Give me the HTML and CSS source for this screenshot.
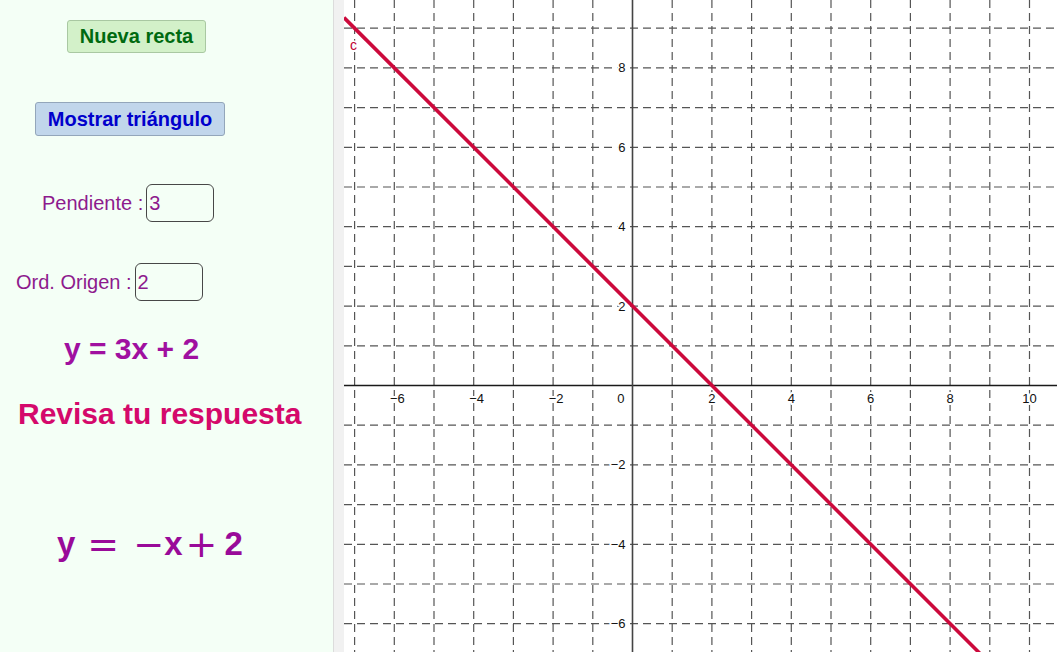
FILE: index.html
```html
<!DOCTYPE html>
<html lang="es">
<head>
<meta charset="utf-8">
<title>Recta</title>
<link rel="stylesheet" href="styles.css">
</head>
<body>
<div class="app">
  <div class="panel">
    <div class="row row-b1"><button class="btn btn-green">Nueva recta</button></div>
    <div class="row row-b2"><button class="btn btn-blue">Mostrar triángulo</button></div>
    <div class="row row-in1"><span class="lbl">Pendiente :</span><span class="box">3</span></div>
    <div class="row row-in2"><span class="lbl">Ord. Origen :</span><span class="box">2</span></div>
    <div class="row row-eq">y = 3x + 2</div>
    <div class="row row-rev">Revisa tu respuesta</div>
    <div class="row row-math"><span class="m m-y">y</span><span class="m m-op m-eq">=</span><span class="m m-op m-minus">−</span><span class="m m-x">x</span><span class="m m-op m-plus">+</span><span class="m m-2">2</span></div>
  </div>
  <div class="strip"></div>
  <div class="graph">
    <svg class="plot" width="713" height="652" viewBox="0 0 713 652" xmlns="http://www.w3.org/2000/svg">
      <g class="grid" id="grid"></g>
      <line class="axis" x1="0" y1="385.5" x2="713" y2="385.5"/>
      <line class="axis axis-y" x1="288.5" y1="0" x2="288.5" y2="652"/>
      <g class="labels" id="labels"></g>
      <line class="rline" x1="0" y1="17.6" x2="713" y2="730.5"/>
      <text class="clabel" x="6" y="50">c</text>
    </svg>
  </div>
</div>
<script src="script.js"></script>
</body>
</html>
```

FILE: script.js
```js
(function () {
  var ns = "http://www.w3.org/2000/svg";
  var ox = 288.5, oy = 385.5, u = 39.7;
  var grid = document.getElementById("grid");
  var labels = document.getElementById("labels");
  function el(name, attrs, parent, txt) {
    var e = document.createElementNS(ns, name);
    for (var k in attrs) e.setAttribute(k, attrs[k]);
    if (txt !== undefined) e.textContent = txt;
    parent.appendChild(e);
    return e;
  }
  var k, x, y;
  for (k = -8; k <= 11; k++) {
    if (k === 0) continue;
    x = ox + k * u;
    if (x < 0 || x > 713) continue;
    el("line", {x1: x, y1: 0, x2: x, y2: 652}, grid);
  }
  for (k = -7; k <= 10; k++) {
    if (k === 0) continue;
    y = oy - k * u;
    if (y < 0 || y > 652) continue;
    el("line", {x1: 0, y1: y, x2: 713, y2: y}, grid);
  }
  for (k = -6; k <= 10; k += 2) {
    if (k === 0) continue;
    x = ox + k * u + (k < 0 ? 3 : 0);
    el("text", {x: x, y: oy + 17.5, "text-anchor": "middle"}, labels, k < 0 ? "\u2212" + (-k) : String(k));
  }
  el("text", {x: ox - 8, y: oy + 17.5, "text-anchor": "end"}, labels, "0");
  for (k = -6; k <= 8; k += 2) {
    if (k === 0) continue;
    y = oy - k * u;
    el("text", {x: ox - 7, y: y + 4.5, "text-anchor": "end"}, labels, k < 0 ? "\u2212" + (-k) : String(k));
  }
})();
```

FILE: styles.css
```css
html, body {
  margin: 0;
  padding: 0;
  width: 1057px;
  height: 652px;
  overflow: hidden;
  font-family: "Liberation Sans", Arial, sans-serif;
}

.app {
  display: flex;
  width: 1057px;
  height: 652px;
}

.panel {
  width: 333px;
  height: 652px;
  flex: none;
  background: #f4fff6;
  border-right: 1px solid #dcdcdc;
  display: flex;
  flex-direction: column;
}

.strip {
  width: 10px;
  flex: none;
  background: #f1f1f1;
}

.graph {
  flex: 1;
  background: #ffffff;
  overflow: hidden;
}

.plot {
  display: block;
}

.row {
  display: flex;
  align-items: center;
}

.btn {
  font-family: "Liberation Sans", Arial, sans-serif;
  font-weight: bold;
  font-size: 20px;
  border-radius: 3px;
  padding: 0;
  margin: 0;
  box-sizing: border-box;
  white-space: nowrap;
  text-align: center;
  cursor: pointer;
}

.btn-green {
  height: 33px;
  width: 139px;
  background: #d3f1c9;
  border: 1px solid #a9c8a2;
  color: #006a10;
}

.btn-blue {
  height: 34px;
  width: 190px;
  background: #c1d6eb;
  border: 1px solid #93a6ba;
  color: #0000cc;
}

.row-b1 { margin-top: 20px; padding-left: 67px; }
.row-b2 { margin-top: 49px; padding-left: 35px; }

.lbl {
  font-size: 20px;
  color: #8d1a8d;
  margin-right: 3px;
  white-space: nowrap;
}

.box {
  box-sizing: border-box;
  width: 68px;
  height: 38px;
  border: 1.5px solid #474747;
  border-radius: 6px;
  font-size: 20px;
  color: #8d1a8d;
  display: flex;
  align-items: center;
  padding-left: 2px;
}

.row-in1 { margin-top: 48px; padding-left: 42px; }
.row-in2 { margin-top: 41px; padding-left: 16px; }

.row-eq {
  margin-top: 30px;
  padding-left: 64px;
  height: 36px;
  font-size: 30px;
  font-weight: bold;
  color: #a010a0;
}

.row-rev {
  margin-top: 29px;
  padding-left: 18px;
  height: 36px;
  font-size: 30px;
  font-weight: bold;
  color: #d4096b;
}

.row-math {
  margin-top: 92px;
  padding-left: 57px;
  height: 40px;
  color: #990a99;
  font-weight: bold;
  font-size: 33px;
}

.m {
  display: inline-block;
}

.m-op {
  font-family: "DejaVu Sans", sans-serif;
  font-weight: normal;
  font-size: 38px;
}

.m-eq { margin-left: 12px; }
.m-minus { margin-left: 14px; font-size: 37px; }
.m-plus { margin-left: 3px; }
.m-2 { margin-left: 7px; }

.grid line {
  stroke: #555555;
  stroke-width: 1.2;
  stroke-dasharray: 8 5;
}

.axis {
  stroke: #1a1a1a;
  stroke-width: 1.3;
}

.axis-y {
  stroke: #444444;
  stroke-width: 1.6;
}

.labels text {
  font-family: "Liberation Sans", Arial, sans-serif;
  font-size: 13px;
  fill: #111111;
  stroke: #ffffff;
  stroke-width: 4px;
  paint-order: stroke;
  stroke-linejoin: round;
}

.rline {
  stroke: #cc0a3c;
  stroke-width: 3.6;
}

.clabel {
  font-family: "Liberation Sans", Arial, sans-serif;
  font-size: 14px;
  fill: #c00030;
  stroke: #ffffff;
  stroke-width: 3px;
  paint-order: stroke;
}
```
